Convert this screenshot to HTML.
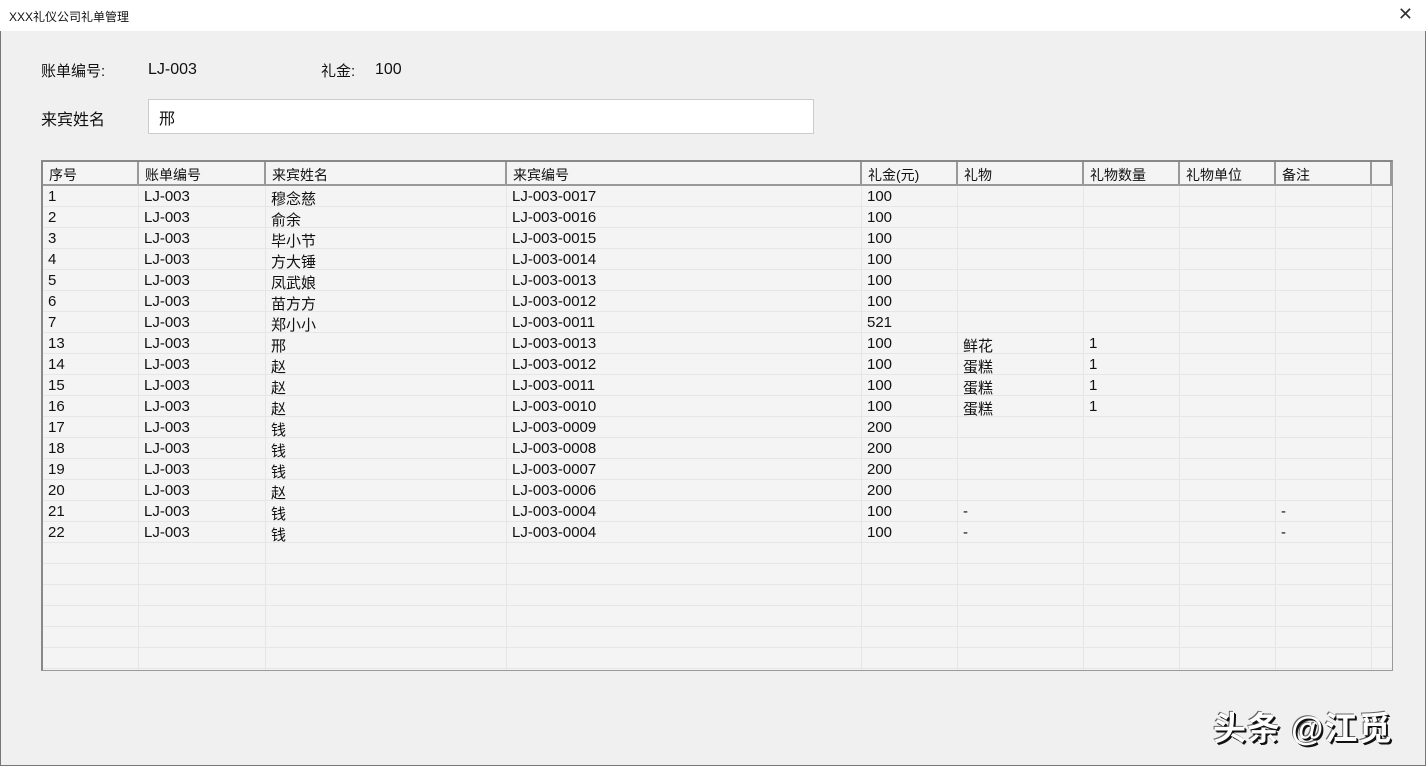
<!DOCTYPE html><html><head><meta charset="utf-8"><style>
body{margin:0;width:1426px;height:766px;background:#f0f0f0;font-family:"Liberation Sans","Microsoft YaHei","Noto Sans CJK SC",sans-serif;position:relative;overflow:hidden;color:#111}
.win{position:absolute;left:0;top:0;width:1424px;height:764px;border:1px solid #777;}
.title{position:absolute;left:0;top:0;width:1426px;height:31px;background:#fff;}
.title span{position:absolute;left:9px;top:8px;font-size:12px}
.x{position:absolute;right:13px;top:4px;font-size:18px;font-weight:300;color:#333}
.l{position:absolute;font-size:15px}
.inp{position:absolute;left:148px;top:99px;width:664px;height:33px;background:#fff;border:1px solid #ccc}
.grid{position:absolute;left:41px;top:160px;width:1349px;height:508px;border:1px solid #999;border-left:2px solid #888;border-top:2px solid #888;background:#f4f4f4}
.c{position:absolute;font-size:15px;white-space:nowrap}
.h{position:absolute;top:0;height:22px;border-right:2px solid #999;border-bottom:2px solid #999;background:#f4f4f4}
.vl{position:absolute;top:24px;bottom:0;width:1px;background:#e6e6e6}
.hl{position:absolute;left:0;right:0;height:1px;background:#e6e6e6}
.wm{position:absolute;left:1213px;top:702px;font-size:33px;font-weight:bold;color:#fff;text-shadow:2px 2px 0 #111,1px 1px 0 #111,-1px -1px 0 #666;letter-spacing:1px}
</style></head><body><div class="win"></div>
<div class="title"><span>XXX礼仪公司礼单管理</span><div class="x">✕</div></div>
<div class="l" style="left:41px;top:60px">账单编号:</div>
<div class="l" style="left:148px;top:61px;font-size:16px">LJ-003</div>
<div class="l" style="left:321px;top:60px">礼金:</div>
<div class="l" style="left:375px;top:61px;font-size:16px">100</div>
<div class="l" style="left:41px;top:106px;font-size:16px">来宾姓名</div>
<div class="inp"><span style="position:absolute;left:10px;top:5px;font-size:16px">邢</span></div>
<div class="grid" id="g"></div>
<div class="wm">头条 @江觅</div>
<script>
var g=document.getElementById('g');
var xs=[0,96,223,464,819,915,1041,1137,1233,1329,1349];
var hd=['序号','账单编号','来宾姓名','来宾编号','礼金(元)','礼物','礼物数量','礼物单位','备注',''];
var s='';
for(var i=0;i<10;i++){s+='<div class="h" style="left:'+xs[i]+'px;width:'+(xs[i+1]-xs[i]-2)+'px"><span class="c" style="left:6px;top:3px;font-size:14px">'+hd[i]+'</span></div>';}
for(var i=1;i<10;i++)s+='<div class="vl" style="left:'+(xs[i]-1)+'px"></div>';
var rows=[[1,'穆念慈','0017',100],[2,'俞余','0016',100],[3,'毕小节','0015',100],[4,'方大锤','0014',100],[5,'凤武娘','0013',100],[6,'苗方方','0012',100],[7,'郑小小','0011',521],[13,'邢','0013',100,'鲜花',1],[14,'赵','0012',100,'蛋糕',1],[15,'赵','0011',100,'蛋糕',1],[16,'赵','0010',100,'蛋糕',1],[17,'钱','0009',200],[18,'钱','0008',200],[19,'钱','0007',200],[20,'赵','0006',200],[21,'钱','0004',100,'-','','-'],[22,'钱','0004',100,'-','','-']];
for(var r=0;r<23;r++){var y=24+r*21;s+='<div class="hl" style="top:'+(y+20)+'px"></div>';
var d=rows[r];if(!d)continue;
var cells=[d[0],'LJ-003',d[1],'LJ-003-'+d[2],d[3],d[4]||'',d[5]||'','',d[6]||''];
for(var i=0;i<9;i++)if(cells[i]!=='')s+='<span class="c" style="left:'+(xs[i]+5)+'px;top:'+(y+2)+'px">'+cells[i]+'</span>';}
g.innerHTML=s;
</script></body></html>
